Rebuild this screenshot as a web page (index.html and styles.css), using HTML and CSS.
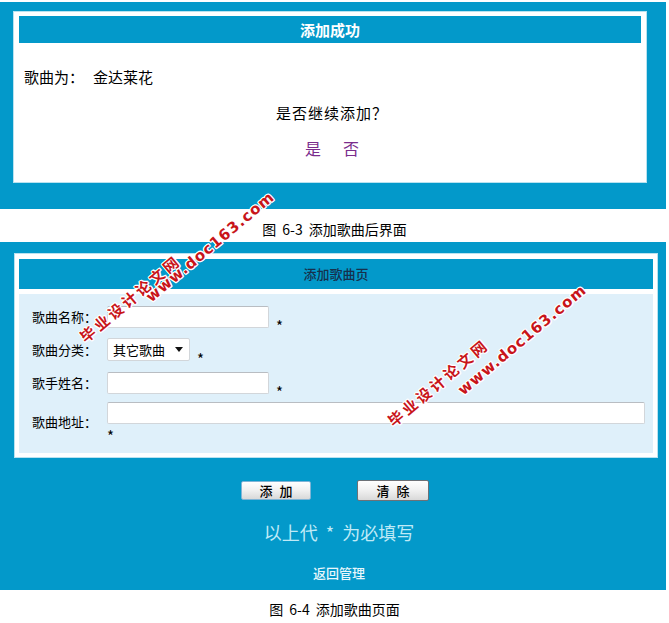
FILE: index.html
```html
<!DOCTYPE html>
<html lang="zh">
<head>
<meta charset="utf-8">
<title>添加歌曲</title>
<link rel="stylesheet" href="styles.css">
</head>
<body>
<div class="page">
  <section class="panel panel-top">
    <div class="box box-top">
      <div class="bar bar-top">添加成功</div>
      <div class="song-line"><span>歌曲为：</span><span class="song-name">金达莱花</span></div>
      <div class="question">是否继续添加？</div>
      <div class="choices"><a href="#" class="choice">是</a><a href="#" class="choice">否</a></div>
    </div>
  </section>
  <div class="caption caption-1">图 6-3 添加歌曲后界面</div>
  <section class="panel panel-form">
    <div class="box box-form">
      <div class="bar bar-form">添加歌曲页</div>
      <div class="form-area">
        <div class="row row-1">
          <span class="label">歌曲名称：</span>
          <span class="input short"></span>
          <span class="star">*</span>
        </div>
        <div class="row row-2">
          <span class="label">歌曲分类：</span>
          <span class="select">其它歌曲<span class="arrow"></span></span>
          <span class="star">*</span>
        </div>
        <div class="row row-3">
          <span class="label">歌手姓名：</span>
          <span class="input short"></span>
          <span class="star">*</span>
        </div>
        <div class="row row-4">
          <span class="label">歌曲地址：</span>
          <div class="addr">
            <span class="input long"></span>
            <span class="star star-below">*</span>
          </div>
        </div>
      </div>
    </div>
    <div class="buttons">
      <span class="btn btn-add">添 加</span>
      <span class="btn btn-clear">清 除</span>
    </div>
    <div class="note">以上代 * 为必填写</div>
    <div class="back">返回管理</div>
  </section>
  <div class="caption caption-2">图 6-4 添加歌曲页面</div>

  <div class="wm wm-a1">毕业设计论文网</div>
  <div class="wm wm-b1">www.doc163.com</div>
  <div class="wm wm-a2">毕业设计论文网</div>
  <div class="wm wm-b2">www.doc163.com</div>
</div>
</body>
</html>
```

FILE: styles.css
```css
* { box-sizing: border-box; }
html, body { margin: 0; padding: 0; background: #ffffff; }
body {
  font-family: "Noto Sans CJK SC", "DejaVu Sans", sans-serif;
  color: #000;
}
.page {
  position: relative;
  width: 669px;
  height: 623px;
  overflow: hidden;
  padding-top: 2px;
}
.panel {
  background: #0399ca;
  width: 666px;
}
.panel-top {
  height: 207px;
  padding: 9px 0 0 13px;
}
.box {
  background: #ffffff;
  border: 1px solid #b8e2f0;
  padding: 4px 5px;
}
.box-top {
  width: 634px;
  height: 172px;
}
.bar {
  background: #0399ca;
  text-align: center;
}
.bar-top {
  height: 27px;
  line-height: 27px;
  color: #ffffff;
  font-weight: bold;
  font-size: 15px;
}
.song-line {
  margin-top: 23px;
  padding-left: 5px;
  font-size: 15px;
  line-height: 22px;
}
.song-name { margin-left: 9px; }
.question {
  margin-top: 14px;
  text-align: center;
  font-size: 15px;
  letter-spacing: 1px;
  line-height: 22px;
  padding-left: 4px;
}
.choices {
  margin-top: 13px;
  display: flex;
  justify-content: center;
  gap: 22px;
  padding-left: 4px;
}
.choice {
  color: #7a2c8c;
  text-decoration: none;
  font-size: 16px;
  line-height: 22px;
}
.caption {
  font-size: 14px;
  word-spacing: 3px;
  text-align: center;
  line-height: 20px;
  color: #000;
}
.caption-1 {
  height: 33px;
  padding-top: 10px;
  padding-left: 0;
}
.panel-form {
  height: 348px;
  padding: 11px 0 0 14px;
}
.box-form {
  width: 644px;
  padding: 5px 4px 4px 4px;
}
.bar-form {
  height: 30px;
  line-height: 30px;
  color: #16304c;
  font-size: 13px;
  font-weight: 500;
}
.form-area {
  margin-top: 5px;
  background: #dff0fa;
  height: 159px;
  padding: 12px 0 0 13px;
}
.row {
  display: flex;
  align-items: center;
  font-size: 13px;
}
.label {
  width: 75px;
  line-height: 18px;
}
.input {
  display: block;
  background: #ffffff;
  border: 1px solid #d2d6da;
  border-top-color: #b9bdc2;
  border-radius: 2px;
  height: 22px;
}
.short { width: 162px; }
.long { width: 538px; }
.star {
  font-size: 15px;
  line-height: 14px;
  margin-left: 7px;
  align-self: flex-end;
  margin-bottom: -5px;
}
.row-2 { margin-top: 10px; }
.row-3 { margin-top: 11px; }
.row-4 { margin-top: 8px; align-items: flex-start; }
.row-4 .label { margin-top: 11px; }
.addr { display: flex; flex-direction: column; }
.star-below { margin-left: 0; margin-top: 5px; margin-bottom: 0; align-self: flex-start; }
.select {
  display: flex;
  align-items: center;
  background: #ffffff;
  border: 1px solid #d2d6da;
  border-radius: 2px;
  width: 83px;
  height: 23px;
  padding-left: 5px;
  font-size: 13px;
}
.arrow {
  width: 0;
  height: 0;
  margin-left: 10px;
  border-left: 4px solid transparent;
  border-right: 4px solid transparent;
  border-top: 5px solid #111;
}
.buttons {
  display: flex;
  justify-content: center;
  align-items: center;
  gap: 46px;
  margin-top: 22px;
  padding-right: 10px;
}
.btn {
  display: block;
  text-align: center;
  font-size: 13px;
  font-weight: 500;
  word-spacing: 4px;
  color: #000;
  background: linear-gradient(#ffffff, #f0f0f0 50%, #d9d9d9);
  border-radius: 2px;
}
.btn-add {
  width: 70px;
  height: 19px;
  line-height: 17px;
  border: 1px solid #7fb4d6;
}
.btn-clear {
  width: 72px;
  height: 21px;
  line-height: 19px;
  border: 1px solid #6d7177;
}
.note {
  margin-top: 19px;
  text-align: center;
  color: #bfeaf7;
  font-size: 18px;
  word-spacing: 4px;
  line-height: 24px;
  padding-right: 2px;
}
.back {
  margin-top: 20px;
  text-align: center;
  color: #e8f7fc;
  font-size: 13px;
  font-weight: 500;
  line-height: 18px;
  padding-right: 2px;
}
.caption-2 {
  padding-top: 9px;
}
.wm {
  position: absolute;
  color: #c8141a;
  font-weight: bold;
  font-family: "DejaVu Sans", "Noto Sans CJK SC", sans-serif;
  white-space: nowrap;
  transform-origin: 0 50%;
  transform: rotate(-40deg);
  text-shadow: -1px -1px 0 #fff, 1px -1px 0 #fff, -1px 1px 0 #fff, 1px 1px 0 #fff, 0 1px 0 #fff, 0 -1px 0 #fff, 1px 0 0 #fff, -1px 0 0 #fff;
  line-height: 18px;
}
.wm-a1, .wm-a2 {
  font-family: "Noto Sans CJK SC", sans-serif;
  font-size: 15px;
  letter-spacing: 3px;
}
.wm-b1, .wm-b2 {
  font-size: 15px;
  letter-spacing: 1px;
}
.wm-a1 { left: 82px; top: 330px; }
.wm-b1 { left: 148px; top: 290px; }
.wm-a2 { left: 390px; top: 414px; }
.wm-b2 { left: 460px; top: 383px; }
```
